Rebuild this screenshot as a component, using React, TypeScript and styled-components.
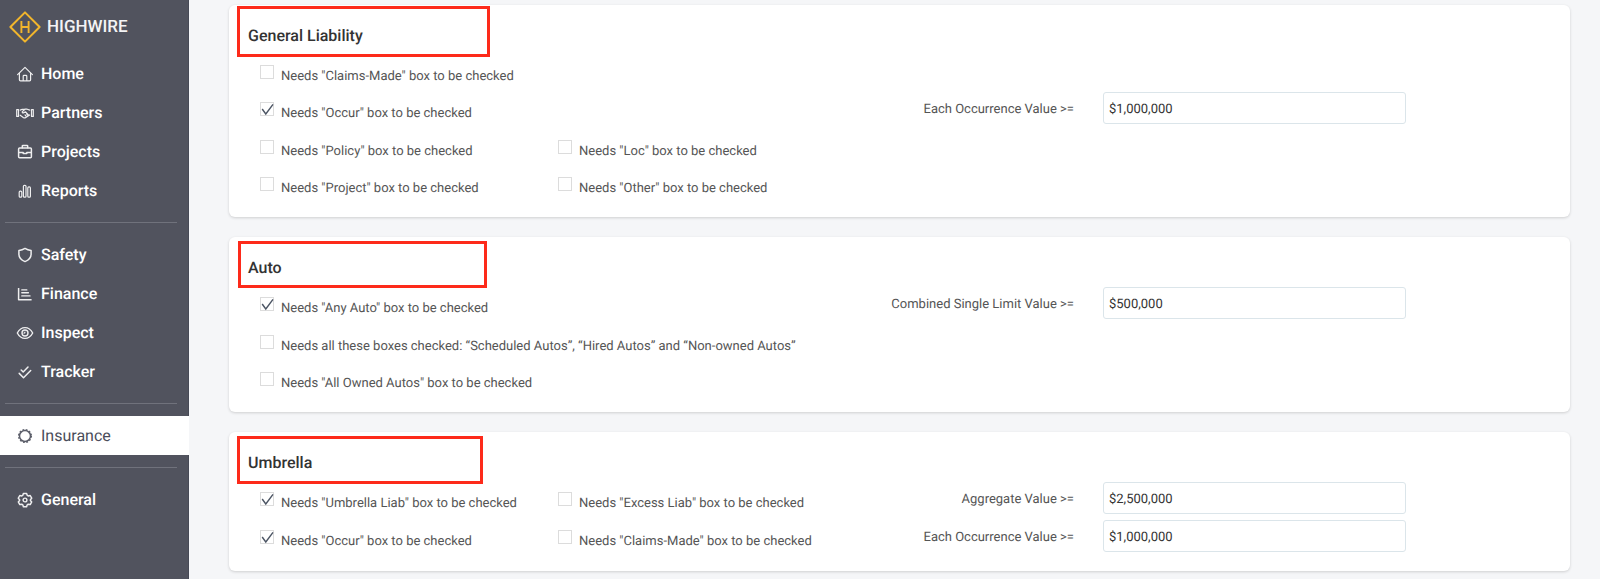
import React, { useId, useState } from "react";
import styled, { createGlobalStyle } from "styled-components";

const GlobalStyle = createGlobalStyle`
  *, *::before, *::after { box-sizing: border-box; }
  body {
    margin: 0;
    background: #f5f6f8;
    font-family: Roboto, "Liberation Sans", sans-serif;
    color: #555;
    text-rendering: geometricPrecision;
    -webkit-font-smoothing: antialiased;
  }
`;

const Page = styled.div`
  display: flex;
  min-height: 100vh;
`;

const Sidebar = styled.aside`
  flex: 0 0 189px;
  background: #51535e;
  border-right: 1px solid #474a56;
`;

const Brand = styled.a`
  display: flex;
  align-items: center;
  gap: 6px;
  height: 54px;
  padding-left: 9px;
  color: #f4f4f5;
  font-size: 17px;
  font-weight: 500;
  line-height: 20px;
  text-decoration: none;
`;

const NavGroup = styled.ul`
  list-style: none;
  margin: 0;
  padding: 0;
`;

const NavLink = styled.a<{ $active?: boolean }>`
  display: flex;
  align-items: center;
  gap: 7px;
  height: 39px;
  padding-left: 16px;
  margin-right: -1px;
  font-size: 16px;
  font-weight: ${(p) => (p.$active ? 400 : 500)};
  text-decoration: none;
  color: ${(p) => (p.$active ? "#4a4d5a" : "#fff")};
  background: ${(p) => (p.$active ? "#fff" : "transparent")};
`;

const IconSvg = styled.svg`
  flex: none;
  width: 18px;
  height: 18px;
  fill: none;
  stroke: currentColor;
  stroke-width: 1.2;
  stroke-linecap: round;
  stroke-linejoin: round;
  opacity: 0.9;
`;

const Divider = styled.hr`
  height: 1px;
  margin: 12px 11px 12px 5px;
  border: 0;
  background: #70727c;
`;

const Main = styled.main`
  flex: 1;
  min-width: 0;
  display: flex;
  flex-direction: column;
  gap: 20px;
  padding: 5px 30px 8px 40px;
`;

const Card = styled.section`
  position: relative;
  padding-bottom: 13px;
  border-radius: 6px;
  background: #fff;
  box-shadow: 0 1px 3px rgba(0, 0, 0, 0.16);
`;

const CardTitle = styled.h2`
  margin: 0;
  padding: 0 19px;
  height: 50px;
  font-size: 16px;
  font-weight: 500;
  line-height: 62px;
  color: #333;
`;

const Callout = styled.div<{ $x: number; $y: number; $w: number; $h: number }>`
  position: absolute;
  left: ${(p) => p.$x}px;
  top: ${(p) => p.$y}px;
  width: ${(p) => p.$w}px;
  height: ${(p) => p.$h}px;
  border: 3px solid #fd2a1a;
  pointer-events: none;
`;

const Row = styled.div<{ $tall?: boolean }>`
  display: grid;
  grid-template-columns: 298fr 272fr 273fr 303fr 164fr;
  align-items: start;
  height: ${(p) => (p.$tall ? 38 : 37)}px;
  padding-left: 31px;
`;

const CheckLabel = styled.label<{ $wide?: boolean }>`
  grid-column: span ${(p) => (p.$wide ? 2 : 1)};
  display: flex;
  align-items: flex-start;
  gap: 7px;
  padding-top: 10px;
  font-size: 13px;
  line-height: 24px;
  white-space: nowrap;
`;

const CheckBoxWrap = styled.span`
  position: relative;
  display: flex;
`;

const CheckInput = styled.input`
  appearance: none;
  width: 14px;
  height: 14px;
  margin: 0;
  border: 1px solid #dcdcdc;
  background: #fff;
`;

const Tick = styled.svg`
  position: absolute;
  inset: 0;
  width: 14px;
  height: 14px;
  fill: none;
  stroke: #4c5564;
  stroke-width: 1.4;
  pointer-events: none;
`;

const FieldLabel = styled.label`
  grid-column: 3;
  padding-right: 29px;
  font-size: 13px;
  line-height: 36px;
  text-align: right;
  white-space: nowrap;
`;

const FieldInput = styled.input`
  grid-column: 4;
  width: 100%;
  height: 32px;
  padding: 2px 5px 0;
  border: 1px solid #dbe5ea;
  border-radius: 3px;
  background: #fff;
  font-family: inherit;
  font-size: 13px;
  text-rendering: inherit;
  color: #333;
`;

const icons: Record<string, React.ReactNode> = {
  home: (
    <>
      <path d="M1.6 9.6 9 2.4l7.4 7.2" />
      <path d="M3.4 8.2v6.6q0 1 1 1h9.2q1 0 1-1V8.2M7.2 15.6v-4.4q0-.8.8-.8h2q.8 0 .8.8v4.4" />
    </>
  ),
  partners: (
    <>
      <path d="M.7 5.6h1.8v6.8H.7zM15.5 5.6h1.8v6.8h-1.8zM4.2 6.1l2-.8h2.3M4.2 11.2l3.1 2.3q1.3.8 2.5 0l3.8-2.5" />
      <path d="m13.8 6.1-2.6-.9H9L6.3 7.6q-.4 1.3 1.1 1.3L9.6 7.8l3.2 3.6M9 10.9l1.2 1.5M10.6 9.9l1.2 1.4" />
    </>
  ),
  projects: (
    <>
      <rect x="2.6" y="5" width="12.8" height="9.8" rx="1" strokeWidth="1.5" />
      <path d="M6.3 4.8V3.1q0-.7.7-.7h4q.7 0 .7.7v1.7M2.8 9.6h4.4v1h3.6v-1h4.4" strokeWidth="1.5" />
    </>
  ),
  reports: (
    <>
      <rect x="3.2" y="9.2" width="2.6" height="6" rx="1" />
      <rect x="7.4" y="3.3" width="2.6" height="11.9" rx="1" />
      <rect x="11.8" y="4.9" width="2.6" height="10.3" rx="1" />
    </>
  ),
  safety: (
    <path
      strokeWidth="1.5"
      d="M9 2.4Q6.4 4.1 2.9 4.6v3.6c0 3.2 2.3 5.8 6.1 7.4 3.8-1.6 6.1-4.2 6.1-7.4V4.6Q11.6 4.1 9 2.4z"
    />
  ),
  finance: (
    <>
      <path d="M2.6 3v11.8h13" strokeWidth="1.5" strokeLinecap="butt" />
      <path d="M5.8 4.9h5M5.8 7.8h6.6M5.8 10.9h8.2" strokeWidth="1.4" />
    </>
  ),
  inspect: (
    <>
      <path strokeWidth="1.4" d="M1.3 9C3.2 5.4 5.8 3.6 9 3.6S14.8 5.4 16.7 9c-1.9 3.6-4.5 5.4-7.7 5.4S3.2 12.6 1.3 9z" />
      <circle cx="9" cy="9" r="3" strokeWidth="1.4" />
      <path d="M8 9.1Q9 9 9 8" />
    </>
  ),
  tracker: (
    <>
      <path d="m5.2 7 2 2 4.8-5" strokeWidth="1.5" />
      <path d="m3.2 10.4 4.3 4.3 7.2-7.2" strokeWidth="1.5" />
    </>
  ),
  insurance: (
    <>
      <circle cx="9" cy="9" r="5.5" strokeWidth="1.5" />
      <circle cx="9" cy="9" r="6.4" strokeWidth="1.3" strokeLinecap="butt" strokeDasharray="1.75 1.601" />
    </>
  ),
  general: (
    <>
      <path
        strokeWidth="1.5"
        d="M7.4 2.4h3.2l.6 1.9 1 .6 2-.4 1.5 2.7-1.3 1.5v.7l1.3 1.5-1.5 2.7-2-.4-1 .6-.6 1.9H7.4l-.6-1.9-1-.6-2 .4-1.5-2.7 1.3-1.5v-.7L2.3 7.2l1.5-2.7 2 .4 1-.6z"
      />
      <circle cx="9" cy="9" r="1.9" strokeWidth="1.4" />
    </>
  ),
};

type NavItem = { label: string; icon: string; active?: boolean };

const navGroups: NavItem[][] = [
  [
    { label: "Home", icon: "home" },
    { label: "Partners", icon: "partners" },
    { label: "Projects", icon: "projects" },
    { label: "Reports", icon: "reports" },
  ],
  [
    { label: "Safety", icon: "safety" },
    { label: "Finance", icon: "finance" },
    { label: "Inspect", icon: "inspect" },
    { label: "Tracker", icon: "tracker" },
  ],
  [{ label: "Insurance", icon: "insurance", active: true }],
  [{ label: "General", icon: "general" }],
];

type Check = { text: string; checked?: boolean; wide?: boolean };
type RowData = { checks: Check[]; field?: { label: string; value: string } };
type CardData = { title: string; callout: [number, number, number, number]; rows: RowData[] };

const cards: CardData[] = [
  {
    title: "General Liability",
    callout: [8, 1, 253, 51],
    rows: [
      { checks: [{ text: 'Needs "Claims-Made" box to be checked' }] },
      {
        checks: [{ text: 'Needs "Occur" box to be checked', checked: true }],
        field: { label: "Each Occurrence Value >=", value: "$1,000,000" },
      },
      { checks: [{ text: 'Needs "Policy" box to be checked' }, { text: 'Needs "Loc" box to be checked' }] },
      { checks: [{ text: 'Needs "Project" box to be checked' }, { text: 'Needs "Other" box to be checked' }] },
    ],
  },
  {
    title: "Auto",
    callout: [9, 4, 249, 47],
    rows: [
      {
        checks: [{ text: 'Needs "Any Auto" box to be checked', checked: true }],
        field: { label: "Combined Single Limit Value >=", value: "$500,000" },
      },
      {
        checks: [
          { text: "Needs all these boxes checked: “Scheduled Autos”, “Hired Autos” and “Non-owned Autos”", wide: true },
        ],
      },
      { checks: [{ text: 'Needs "All Owned Autos" box to be checked' }] },
    ],
  },
  {
    title: "Umbrella",
    callout: [8, 4, 246, 48],
    rows: [
      {
        checks: [
          { text: 'Needs "Umbrella Liab" box to be checked', checked: true },
          { text: 'Needs "Excess Liab" box to be checked' },
        ],
        field: { label: "Aggregate Value >=", value: "$2,500,000" },
      },
      {
        checks: [
          { text: 'Needs "Occur" box to be checked', checked: true },
          { text: 'Needs "Claims-Made" box to be checked' },
        ],
        field: { label: "Each Occurrence Value >=", value: "$1,000,000" },
      },
    ],
  },
];

function CheckOption({ text, checked = false, wide }: Check) {
  const [on, setOn] = useState(checked);
  return (
    <CheckLabel $wide={wide}>
      <CheckBoxWrap>
        <CheckInput type="checkbox" checked={on} onChange={(e) => setOn(e.target.checked)} />
        {on && (
          <Tick viewBox="0 0 14 14" aria-hidden="true">
            <path d="m2.2 7 3.6 5L13 2.4" />
          </Tick>
        )}
      </CheckBoxWrap>
      <span>{text}</span>
    </CheckLabel>
  );
}

function RequirementRow({ checks, field }: RowData) {
  const id = useId();
  return (
    <Row $tall={!!field}>
      {checks.map((c) => (
        <CheckOption key={c.text} {...c} />
      ))}
      {field && (
        <>
          <FieldLabel htmlFor={id}>{field.label}</FieldLabel>
          <FieldInput id={id} type="text" defaultValue={field.value} />
        </>
      )}
    </Row>
  );
}

export default function App() {
  return (
    <>
      <GlobalStyle />
      <Page>
        <Sidebar>
          <Brand href="#">
            <svg width="32" height="32" viewBox="0 0 32 32" fill="none" stroke="#f2b62c" aria-hidden="true">
              <path d="M16 1.4 30.6 16 16 30.6 1.4 16z" strokeWidth="2" strokeLinejoin="round" />
              <path d="M12.4 10v12M19.6 10v12M12.4 16h7.2" strokeWidth="1.9" />
            </svg>
            HIGHWIRE
          </Brand>
          <nav>
            {navGroups.map((group, i) => (
              <React.Fragment key={group[0].label}>
                {i > 0 && <Divider />}
                <NavGroup>
                  {group.map((item) => (
                    <li key={item.label}>
                      <NavLink href="#" $active={item.active} aria-current={item.active ? "page" : undefined}>
                        <IconSvg viewBox="0 0 18 18" aria-hidden="true">
                          {icons[item.icon]}
                        </IconSvg>
                        {item.label}
                      </NavLink>
                    </li>
                  ))}
                </NavGroup>
              </React.Fragment>
            ))}
          </nav>
        </Sidebar>
        <Main>
          {cards.map(({ title, callout: [x, y, w, h], rows }) => (
            <Card key={title}>
              <CardTitle>{title}</CardTitle>
              <Callout $x={x} $y={y} $w={w} $h={h} />
              {rows.map((row, i) => (
                <RequirementRow key={i} {...row} />
              ))}
            </Card>
          ))}
        </Main>
      </Page>
    </>
  );
}
